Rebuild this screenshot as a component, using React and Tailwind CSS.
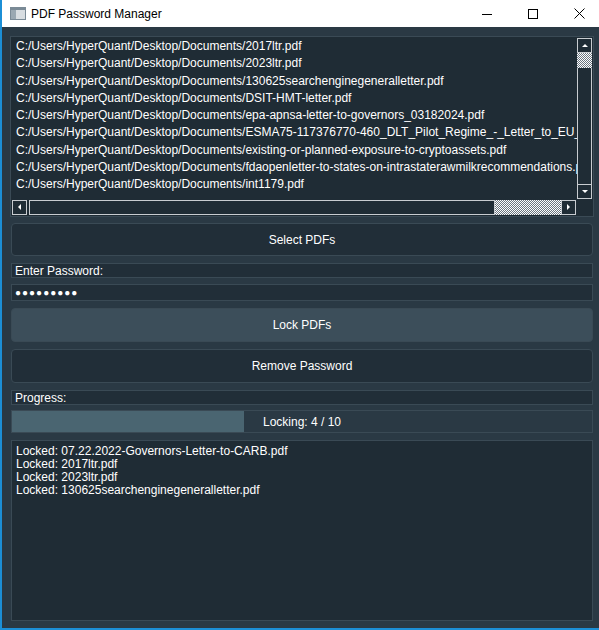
import React from 'react';

const files = [
  'C:/Users/HyperQuant/Desktop/Documents/2017ltr.pdf',
  'C:/Users/HyperQuant/Desktop/Documents/2023ltr.pdf',
  'C:/Users/HyperQuant/Desktop/Documents/130625searchenginegeneralletter.pdf',
  'C:/Users/HyperQuant/Desktop/Documents/DSIT-HMT-letter.pdf',
  'C:/Users/HyperQuant/Desktop/Documents/epa-apnsa-letter-to-governors_03182024.pdf',
  'C:/Users/HyperQuant/Desktop/Documents/ESMA75-117376770-460_DLT_Pilot_Regime_-_Letter_to_EU_Institutions.pdf',
  'C:/Users/HyperQuant/Desktop/Documents/existing-or-planned-exposure-to-cryptoassets.pdf',
  'C:/Users/HyperQuant/Desktop/Documents/fdaopenletter-to-states-on-intrastaterawmilkrecommendations.pdf',
  'C:/Users/HyperQuant/Desktop/Documents/int1179.pdf',
];

const log = [
  'Locked: 07.22.2022-Governors-Letter-to-CARB.pdf',
  'Locked: 2017ltr.pdf',
  'Locked: 2023ltr.pdf',
  'Locked: 130625searchenginegeneralletter.pdf',
];

const checker =
  'bg-[repeating-conic-gradient(#ffffff_0_25%,#6b7680_0_50%)] bg-[length:2px_2px]';

function Arrow({ dir }) {
  const pts = {
    up: '1,5 4,2 7,5',
    down: '1,2 4,5 7,2',
    left: '5,1 2,4 5,7',
    right: '2,1 5,4 2,7',
  }[dir];
  return (
    <div className="w-[15px] h-[15px] border border-[#c8ccd0] bg-[#1f2c35] flex items-center justify-center shrink-0">
      <svg width="8" height="8" viewBox="0 0 8 8">
        <polygon points={pts} fill="#ffffff" />
      </svg>
    </div>
  );
}

function TitleBar() {
  return (
    <div className="h-[27px] bg-white flex items-center shrink-0 overflow-hidden">
      <svg width="16" height="13" viewBox="0 0 16 13" className="ml-[8px] shrink-0">
        <rect x="0" y="0" width="16" height="13" fill="#7a8a96" />
        <rect x="1" y="3" width="14" height="9" fill="#d8dde1" />
        <rect x="1" y="3" width="5" height="9" fill="#9aa8b2" />
      </svg>
      <span className="ml-[5px] text-[12px] text-black">PDF Password Manager</span>
      <div className="ml-auto flex items-center h-full mr-[-3px]">
        <div className="w-[46px] h-full flex items-center justify-center">
          <svg width="10" height="10" viewBox="0 0 10 10">
            <line x1="0" y1="5.5" x2="10" y2="5.5" stroke="#000" strokeWidth="1" />
          </svg>
        </div>
        <div className="w-[46px] h-full flex items-center justify-center">
          <svg width="10" height="10" viewBox="0 0 10 10">
            <rect x="0.5" y="0.5" width="9" height="9" fill="none" stroke="#000" strokeWidth="1" />
          </svg>
        </div>
        <div className="w-[46px] h-full flex items-center justify-center">
          <svg width="11" height="11" viewBox="0 0 11 11">
            <path d="M0.5 0.5 L10.5 10.5 M10.5 0.5 L0.5 10.5" stroke="#000" strokeWidth="1" />
          </svg>
        </div>
      </div>
    </div>
  );
}

function FileList() {
  return (
    <div className="h-[181px] ml-[8px] mr-[5px] mt-[9px] bg-[#1f2c35] border border-[#3a4a55] flex flex-col shrink-0">
      <div className="flex flex-1 min-h-0">
        <div className="flex-1 overflow-hidden pl-[5px] pt-[1px]">
          {files.map((f) => (
            <div key={f} className="h-[17.3px] leading-[17.3px] whitespace-nowrap text-[12px] text-white">
              {f}
            </div>
          ))}
        </div>
        <div className="w-[15px] mr-[1px] mt-[1px] flex flex-col">
          <Arrow dir="up" />
          <div className={`h-[15px] ${checker}`} />
          <div className="flex-1 border-x border-[#c8ccd0]" />
          <Arrow dir="down" />
        </div>
      </div>
      <div className="h-[16px] flex items-center pl-[1px] mb-[1px]">
        <Arrow dir="left" />
        <div className="flex-1 h-[15px] flex">
          <div className="flex-1 ml-[2px] border border-[#c8ccd0]" />
          <div className={`w-[66px] ${checker}`} />
        </div>
        <Arrow dir="right" />
        <div className="w-[17px]" />
      </div>
    </div>
  );
}

function Button({ children, active, h }) {
  return (
    <div
      className={`${h} rounded-[4px] border border-[#3a4a55] flex items-center justify-center text-[12px] text-white ${
        active ? 'bg-[#3c4e5a]' : 'bg-[#212e38]'
      }`}
    >
      {children}
    </div>
  );
}

function Label({ children }) {
  return (
    <div className="h-[15px] bg-[#212e38] border border-[#3a4a55] flex items-center pl-[3px] text-[12px] text-white leading-none">
      {children}
    </div>
  );
}

export default function App() {
  return (
    <div
      className="w-[599px] h-[630px] flex flex-col bg-[#2a3944] border-l-[2px] border-b-[2px] border-[#1c8fd6] overflow-hidden"
      style={{ fontFamily: '"Liberation Sans", Arial, sans-serif' }}
    >
      <TitleBar />
      <FileList />
      <div className="ml-[9px] mr-[6px] mt-[6px] flex flex-col">
        <Button h="h-[33px]">Select PDFs</Button>
        <div className="mt-[7px]">
          <Label>Enter Password:</Label>
        </div>
        <div className="mt-[6px] h-[17px] bg-[#212e38] border border-[#3a4a55] flex items-center pl-[3px] text-[10px] text-white tracking-[1px]">
          ●●●●●●●●●
        </div>
        <div className="mt-[7px]">
          <Button active h="h-[34px]">Lock PDFs</Button>
        </div>
        <div className="mt-[7px]">
          <Button h="h-[34px]">Remove Password</Button>
        </div>
        <div className="mt-[7px]">
          <Label>Progress:</Label>
        </div>
        <div className="mt-[5px] h-[23px] bg-[#2a3944] border border-[#3a4a55] relative flex items-center justify-center text-[12px] text-white">
          <div className="absolute left-0 top-0 bottom-0 w-[40%] bg-[#4a6571]" />
          <span className="relative">Locking: 4 / 10</span>
        </div>
        <div className="mt-[7px] h-[181px] bg-[#1f2c35] border border-[#3a4a55] pl-[4px] pt-[4px]">
          {log.map((l) => (
            <div key={l} className="h-[13px] leading-[13px] text-[12px] text-white whitespace-nowrap">
              {l}
            </div>
          ))}
        </div>
      </div>
    </div>
  );
}
